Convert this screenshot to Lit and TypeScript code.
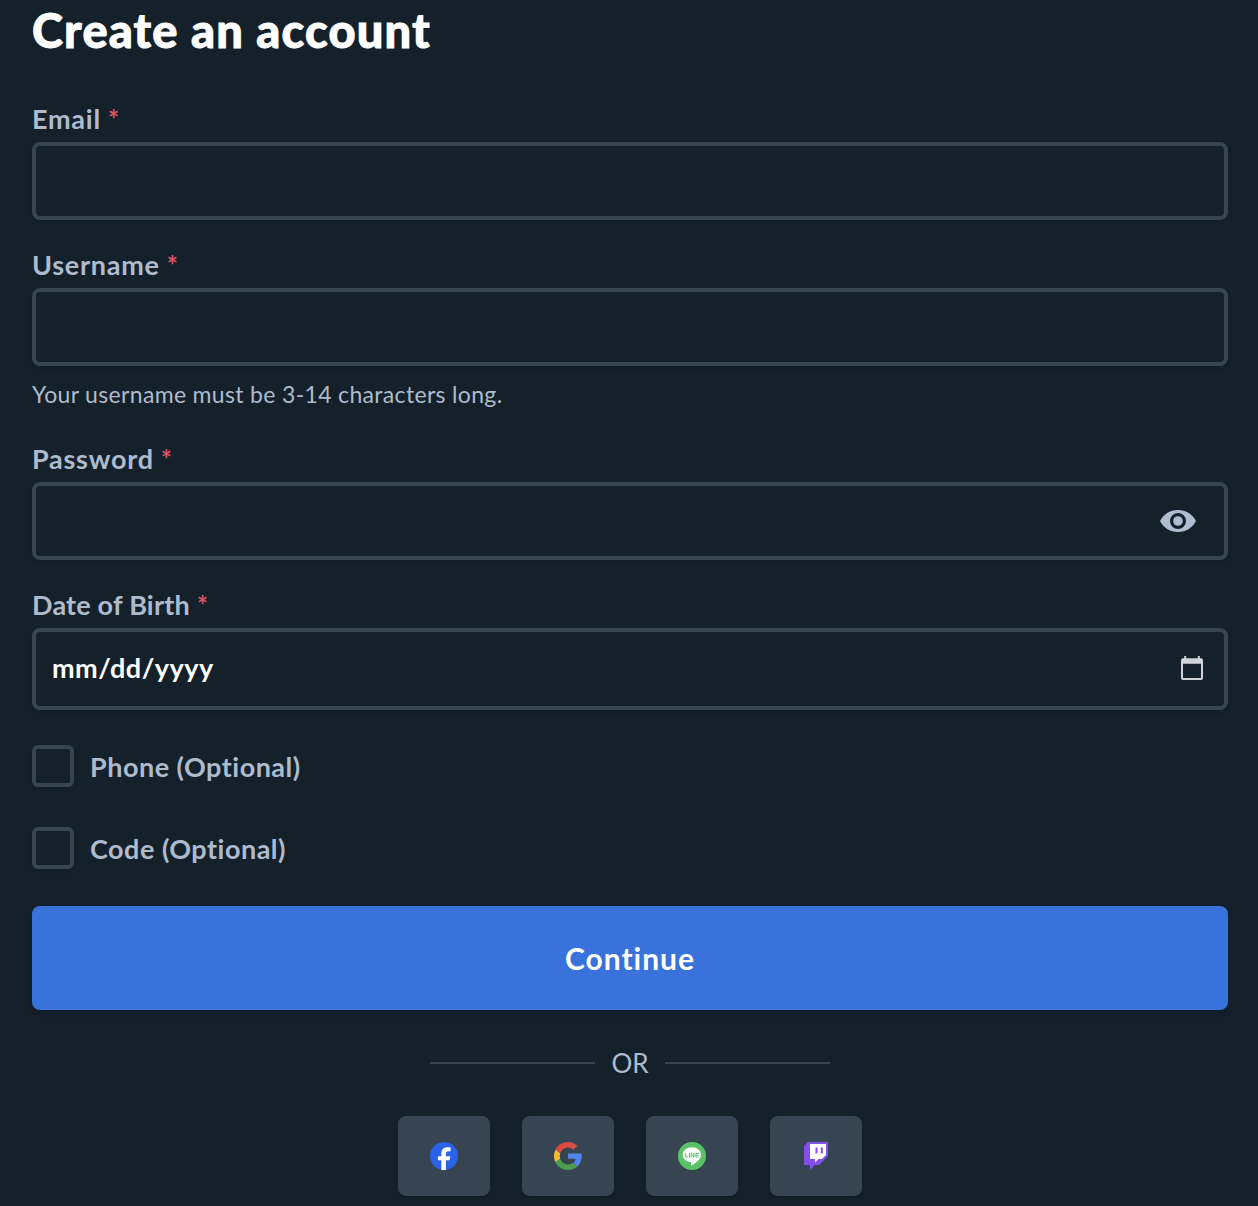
import { LitElement, html, css, svg, nothing } from "lit";
import { customElement, property } from "lit/decorators.js";

const eyeIcon = html`<svg class="eye" viewBox="0 0 36 22" width="36" height="22" aria-hidden="true">
  <path fill="currentColor" fill-rule="evenodd" d="M18 0C9.800 0 3.200 4.500 0 11c3.200 6.500 9.800 11 18 11s14.800-4.500 18-11C32.800 4.500 26.200 0 18 0zm0 19a8 8 0 1 1 0-16 8 8 0 0 1 0 16z"/>
  <circle cx="18" cy="11" r="4.800" fill="currentColor"/>
</svg>`;

const calendarIcon = html`<svg class="calendar" viewBox="0 0 22 24" width="22" height="24" aria-hidden="true">
  <path fill="currentColor" fill-rule="evenodd" d="M3.200 0h2v2.200h11.600V0h2v2.200H20a2 2 0 0 1 2 2V22a2 2 0 0 1-2 2H2a2 2 0 0 1-2-2V4.200a2 2 0 0 1 2-2h1.200zM2 7.800V22h18V7.800z"/>
</svg>`;

const logos: Record<string, unknown> = {
  Facebook: svg`
    <circle cx="14" cy="14" r="14" fill="#2b62ea"/>
    <path fill="#fff" d="M11.300 28V18.300H7.900v-4.100h3.400v-2.600c0-4 2.300-6.300 6.200-6.300 1.200 0 2.300.1 3.100.3v3.700h-2c-2 0-2.700.9-2.700 2.500v2.400h4.400l-.8 4.100h-3.600V28a14 14 0 0 1-4.600 0z"/>`,
  Google: svg`
    <path fill="#d94c3f" d="M14 5.600c2.100 0 4 .7 5.400 2.100l4-4C21 1.500 17.800 0 14 0 8.500 0 3.800 3.100 1.500 7.700l4.700 3.600C7.300 8 10.400 5.600 14 5.600z"/>
    <path fill="#4f86ec" d="M27.700 14.300c0-1-.1-2-.3-2.900H14v5.400h7.700c-.3 1.800-1.300 3.300-2.800 4.300l4.500 3.500c2.700-2.500 4.300-6.100 4.300-10.300z"/>
    <path fill="#f2b92f" d="M6.200 16.700a8.600 8.600 0 0 1 0-5.400L1.500 7.700a14 14 0 0 0 0 12.600z"/>
    <path fill="#4b9f4f" d="M14 28c3.800 0 7-1.200 9.400-3.400l-4.500-3.500c-1.300.9-2.900 1.400-4.900 1.400-3.600 0-6.700-2.500-7.800-5.800l-4.700 3.600C3.800 24.900 8.500 28 14 28z"/>`,
  Line: svg`
    <circle cx="14" cy="14" r="14" fill="#5ac266"/>
    <path fill="#fff" d="M23.100 12.700c0-4.100-4.100-7.500-9.200-7.500s-9.200 3.400-9.200 7.500c0 3.700 3.300 6.800 7.700 7.400.7.100.8.500.7 1.200l-.2 1.600c0 .4.300.6.800.4 1.500-.7 9.400-5.200 9.400-10.600z"/>
    <path fill="none" stroke="#5ac266" stroke-width="1" d="M7.700 11v4h2.400M11.400 11v4.500M13.200 15.500V11.200l2.800 4V11M20.700 11.500h-2.800V15h2.800M17.900 13.200h2.700"/>`,
  Twitch: svg`
    <path fill="#8350ed" d="M6 0 2 4v19h6v5l5-5h4l9-9V0z"/>
    <path fill="#fff" d="M8 2v15h5v3.500l3.500-3.500H20l4-4V2z"/>
    <path fill="#8350ed" d="M13.500 5.500h2v6h-2zM18.800 5.500h2v6h-2z"/>`,
};

@customElement("form-field")
class FormField extends LitElement {
  static styles = css`
    :host { display: block; }
    .label { display: flex; height: 36px; line-height: 26px; font-size: 27px; font-weight: 700; }
    .mark { color: #dc5164; font-size: 26px; margin-left: 7px; line-height: 27px; letter-spacing: 0; }
    .box {
      box-sizing: border-box; display: flex; align-items: center; justify-content: space-between;
      height: 78px; border: 4px solid #374551; border-radius: 8px; padding: 0 28px 0 16px;
      box-shadow: 0 2px 4px rgba(0, 0, 0, 0.14);
    }
    .box.date { height: 82px; padding-right: 21px; color: #fff; font-size: 27px; font-weight: 700; }
    .input { flex: 1; min-width: 0; height: 60px; padding: 0; border: 0; outline: 0; background: transparent; color: #fff; font: inherit; font-size: 26px; }
    .hint { margin-top: 13px; height: 35px; line-height: 31px; font-size: 23px; letter-spacing: 0.33px; }
    .value { letter-spacing: 0.5px; padding-bottom: 3px; }
    .eye { color: #b0bcd0; }
    .calendar { color: #d0d3d8; margin-bottom: 2px; }
  `;

  @property() label = "";
  @property() kind = "text";
  @property() hint = "";

  render() {
    return html`
      <label class="label" for="field"><span>${this.label}</span><span class="mark">*</span></label>
      ${this.kind === "date"
        ? html`<div class="box date"><span class="value">mm/dd/yyyy</span>${calendarIcon}</div>`
        : html`<div class="box">
            <input class="input" id="field" type=${this.kind} />
            ${this.kind === "password" ? eyeIcon : nothing}
          </div>`}
      ${this.hint ? html`<div class="hint">${this.hint}</div>` : nothing}
    `;
  }
}

@customElement("app-root")
class AppRoot extends LitElement {
  static styles = css`
    :host {
      display: block; box-sizing: border-box; height: 1206px; overflow: hidden;
      padding: 0 30px 0 32px; background: #14212b; color: #aebbcd;
      font-family: Lato, "Open Sans", sans-serif; font-variant-ligatures: none;
    }
    .title {
      margin: 0; height: 60px; line-height: 60px; font-size: 47px; font-weight: 900;
      letter-spacing: 1.150px; color: #fff; -webkit-text-stroke: 0.9px #fff;
    }
    .fields { display: flex; flex-direction: column; padding-top: 46px; }
    .field { letter-spacing: 0.75px; }
    .field.snug { letter-spacing: 0.2px; }
    .field + .field { margin-top: 32px; }
    .checks { display: flex; flex-direction: column; gap: 40px; padding-top: 35px; }
    .check { display: flex; align-items: center; gap: 16px; height: 42px; font-size: 27px; font-weight: 700; letter-spacing: 0.5px; }
    .tick { box-sizing: border-box; width: 42px; height: 42px; border: 4px solid #374551; border-radius: 6px; box-shadow: 0 2px 4px rgba(0, 0, 0, 0.14); }
    .caption { padding-top: 1px; }
    .submit {
      display: block; width: 100%; height: 104px; margin-top: 37px; padding: 0; border: 0; border-radius: 8px;
      background: #3872da; color: #fff; font: 700 30px Lato, "Open Sans", sans-serif; letter-spacing: 1px;
      font-variant-ligatures: none; box-shadow: 0 3px 6px rgba(0, 0, 0, 0.15);
    }
    .divider { display: flex; align-items: center; justify-content: center; height: 40px; margin-top: 33px; font-size: 26px; }
    .rule { width: 165px; height: 2px; background: #374551; }
    .or { width: 70px; text-align: center; }
    .socials { display: flex; justify-content: center; gap: 32px; margin-top: 33px; }
    .social {
      display: flex; align-items: center; justify-content: center; width: 92px; height: 80px; padding: 0;
      border: 0; border-radius: 8px; background: #374553; box-shadow: 0 2px 4px rgba(0, 0, 0, 0.14);
    }
  `;

  render() {
    return html`
      <h1 class="title">Create an account</h1>
      <div class="fields">
        <form-field class="field" label="Email" kind="email"></form-field>
        <form-field class="field" label="Username" hint="Your username must be 3-14 characters long."></form-field>
        <form-field class="field" label="Password" kind="password"></form-field>
        <form-field class="field snug" label="Date of Birth" kind="date"></form-field>
      </div>
      <div class="checks">
        ${["Phone (Optional)", "Code (Optional)"].map(
          (text) => html`<div class="check"><span class="tick"></span><span class="caption">${text}</span></div>`
        )}
      </div>
      <button class="submit">Continue</button>
      <div class="divider"><span class="rule"></span><span class="or">OR</span><span class="rule"></span></div>
      <div class="socials">
        ${Object.entries(logos).map(
          ([name, art]) => html`<button class="social" aria-label=${name}><svg width="28" height="28" viewBox="0 0 28 28">${art}</svg></button>`
        )}
      </div>
    `;
  }
}
